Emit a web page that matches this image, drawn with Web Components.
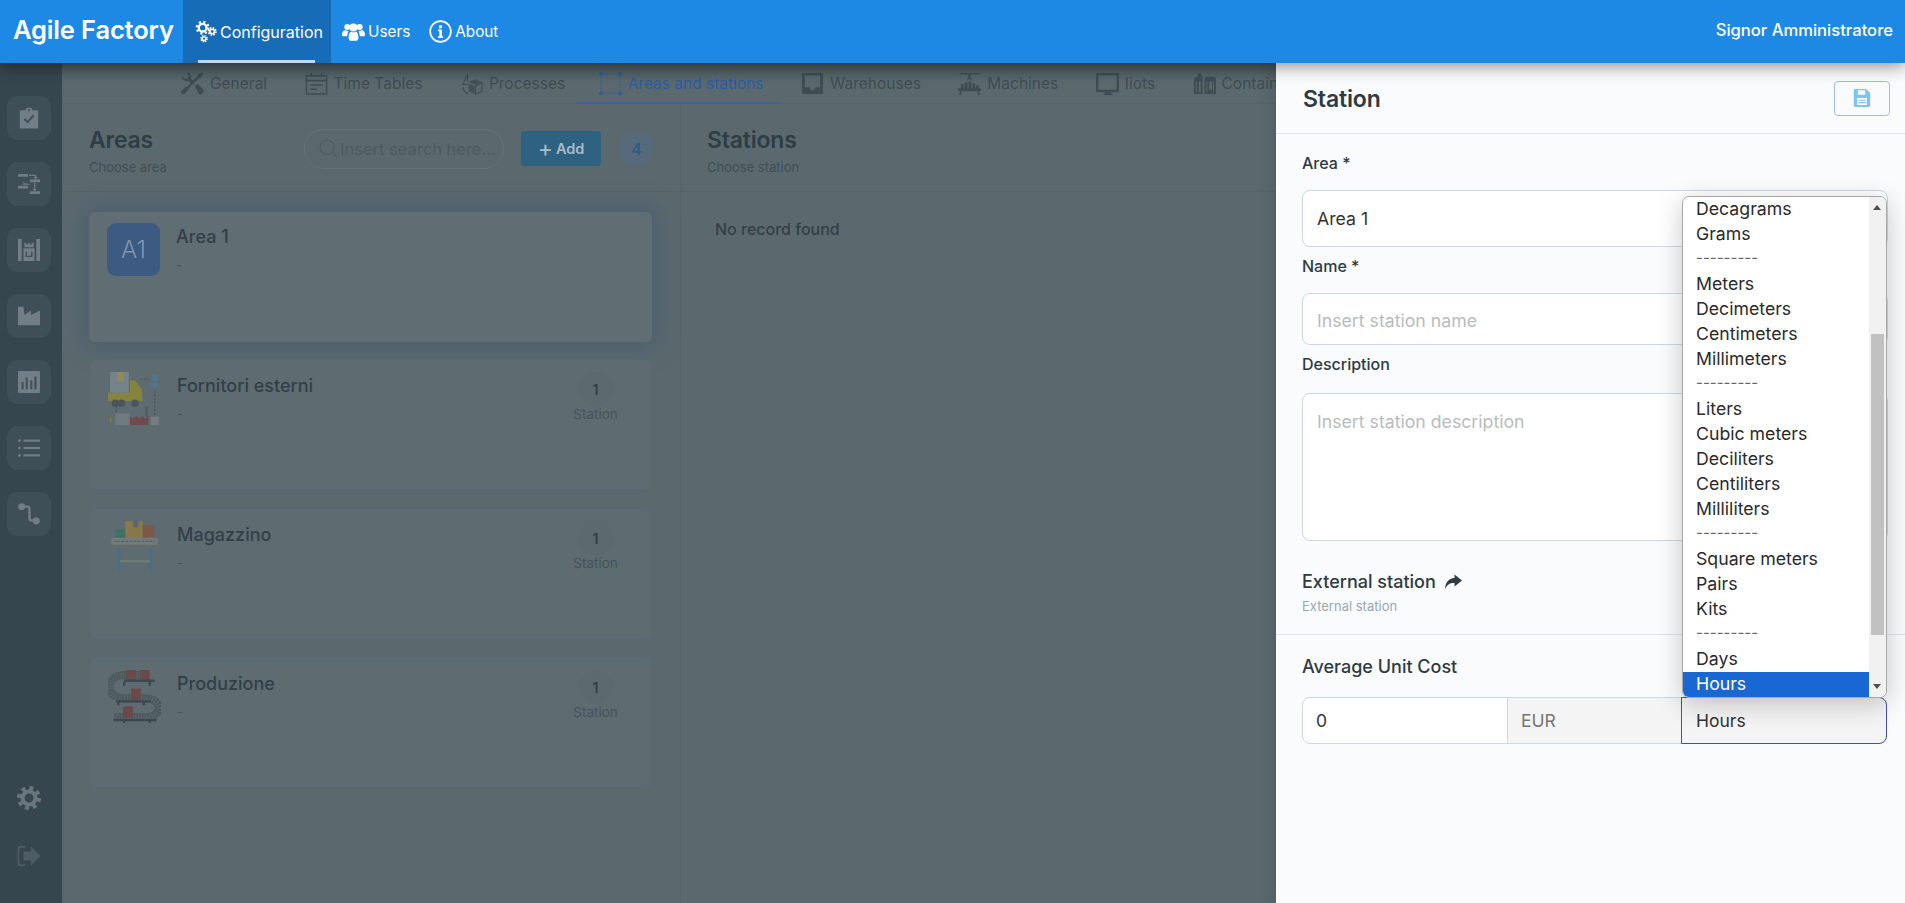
<!DOCTYPE html>
<html lang="en">
<head>
<meta charset="utf-8">
<title>Agile Factory</title>
<style>
  html, body { margin: 0; height: 100%; overflow: hidden; }
  body { font-family: "Inter", "Liberation Sans", sans-serif; color: #2f3d45; background: #5b696f; }
</style>
</head>
<body>
<af-shell>
  <af-topbar slot="top">
    <af-nav icon="cogs" active>Configuration</af-nav>
    <af-nav icon="users">Users</af-nav>
    <af-nav icon="info">About</af-nav>
  </af-topbar>
  <af-rail slot="rail"></af-rail>
  <af-tabs slot="tabs">
    <af-tab icon="tools">General</af-tab>
    <af-tab icon="calendar">Time Tables</af-tab>
    <af-tab icon="cube" style="--after:11.5px">Processes</af-tab>
    <af-tab icon="area" active>Areas and stations</af-tab>
    <af-tab icon="inbox">Warehouses</af-tab>
    <af-tab icon="crane">Machines</af-tab>
    <af-tab icon="monitor">Iiots</af-tab>
    <af-tab icon="silo">Containers</af-tab>
  </af-tabs>
  <af-column slot="left" heading="Areas" sub="Choose area" count="4" class="areas">
    <af-card name="Area 1" initials="A1" selected></af-card>
    <af-card name="Fornitori esterni" art="truck" stations="1"></af-card>
    <af-card name="Magazzino" art="table" stations="1"></af-card>
    <af-card name="Produzione" art="belt" stations="1"></af-card>
  </af-column>
  <af-column slot="right" heading="Stations" sub="Choose station" count="0" class="stations">
    <af-empty>No record found</af-empty>
  </af-column>
  <af-drawer slot="drawer"></af-drawer>
</af-shell>

<script>
const icons = {
  cogs: `<svg viewBox="0 0 24 24"><g fill="none" stroke="currentColor">
    <circle cx="9" cy="8" r="4" stroke-width="2.4"/><circle cx="9" cy="8" r="6" stroke-width="2.6" stroke-dasharray="2.2 2.51"/>
    <circle cx="19" cy="12" r="2.3" stroke-width="1.7"/><circle cx="19" cy="12" r="3.8" stroke-width="1.9" stroke-dasharray="1.6 1.38"/>
    <circle cx="10.5" cy="19.5" r="1.9" stroke-width="1.5"/><circle cx="10.5" cy="19.5" r="3.1" stroke-width="1.7" stroke-dasharray="1.3 1.13"/></g></svg>`,
  users: `<svg viewBox="0 0 26 22" fill="currentColor"><circle cx="6" cy="6" r="3.4"/><circle cx="20" cy="6" r="3.4"/><circle cx="13" cy="6.5" r="4.6"/>
    <path d="M0 15c0-4 2-5.500 4-5.500 1 .8 2.300 1 3.400.8-.8 1.600-1.400 3.500-1.500 6.200H2c-1.200 0-2-.5-2-1.500zM26 15c0-4-2-5.500-4-5.500-1 .8-2.300 1-3.400.8.8 1.600 1.400 3.500 1.500 6.200H24c1.200 0 2-.5 2-1.500z"/>
    <path d="M7.500 18c0-5 1.700-6.800 3-6.800 1.500 1 3.500 1 5 0 1.300 0 3 1.800 3 6.800 0 2.500-1.500 3.500-3 3.500h-5c-1.500 0-3-1-3-3.500z"/></svg>`,
  info: `<svg viewBox="0 0 24 24"><circle cx="12" cy="12" r="10.800" fill="none" stroke="currentColor" stroke-width="1.800"/>
    <path fill="currentColor" d="M10.500 5.500h3v3h-3zM9.500 10h4v7h1.200v1.800H9.500V17h1.300v-5.200H9.500z"/></svg>`,
  tools: `<svg viewBox="0 0 24 24" fill="currentColor">
    <path d="M1.100 4.200 4.300 7.400 7.300 6.600 8.100 3.600 4.900.6C7.800-.2 10.600 1.700 10.800 4.700c0 .8-.1 1.400-.3 2L14 10l-2.500 2.500L8 9.300c-3.200 1.100-7.900-1.100-6.900-5.100z"/>
    <path d="M23 1.500 21.500 0l-4.200 2.800v1.700L5.900 15.800l-1.100-.3-4 4c-.9 1-.9 2.300 0 3.100.9.900 2.200.9 3.100 0l4-4-.3-1.100L19 6.200h1.700z"/>
    <path d="m14.500 14.800 2.600-2.600 6 5.800c.9.900.9 2.400 0 3.300l-1.300 1.300c-.9.900-2.400.9-3.300 0z"/></svg>`,
  calendar: `<svg viewBox="0 0 24 24" fill="none" stroke="currentColor" stroke-width="1.600"><rect x="1.500" y="4" width="21" height="19"/><path d="M1.500 9h21M6.500 1v4M17.500 1v4M5.500 13.500h13M5.500 18h7"/></svg>`,
  cube: `<svg viewBox="0 0 24 24"><path fill="none" stroke="currentColor" stroke-width="1.200" d="M8 2 3 13l5 0M8 2v8M3 16c.5 3 3 6 6 7"/><path fill="currentColor" d="M9 10.500 16 7.500l7 3-7 3zM9 12l6.300 2.700V23L9 20z" opacity=".85"/><path fill="none" stroke="currentColor" stroke-width="1.200" d="M23 11v9.200L16.200 23v-8.500z"/></svg>`,
  area: `<svg viewBox="0 0 24 24"><path fill="none" stroke="currentColor" stroke-width="1.100" stroke-dasharray="1.500 1.300" d="M2 2h20v20H2z"/><g fill="currentColor"><rect width="3.600" height="3.600"/><rect x="20.400" width="3.600" height="3.600"/><rect y="20.400" width="3.600" height="3.600"/><rect x="20.400" y="20.400" width="3.600" height="3.600"/></g></svg>`,
  inbox: `<svg viewBox="0 0 24 24" fill="currentColor"><path fill-rule="evenodd" d="M2.500 1h19c1 0 1.500.6 1.500 1.500v19c0 1-.6 1.500-1.500 1.500h-19C1.600 23 1 22.400 1 21.500v-19C1 1.600 1.600 1 2.500 1zM4 3.500v12.500h5l1.500 3h3l1.500-3h5V3.500z"/></svg>`,
  crane: `<svg viewBox="0 0 24 24" fill="currentColor"><path d="M2 1h20v1.300H13v3l2 3-1 .7-2-2.200-2 2.200-1-.7 2-3V2.300H2z"/><rect x="3" y="13" width="3" height="5"/><rect x="7" y="11" width="3" height="7"/><rect x="11" y="10" width="3" height="8"/><rect x="15" y="12" width="3" height="6"/><rect x="19" y="14" width="3" height="4"/><rect y="17" width="24" height="3" rx="1.500"/><path d="M2 20h1.500v4H1zM20.500 20H22l1 4h-2.500z"/></svg>`,
  monitor: `<svg viewBox="0 0 24 24" fill="currentColor"><path fill-rule="evenodd" d="M1.500 1h21c.9 0 1.500.6 1.500 1.500v17c0 .9-.6 1.500-1.500 1.500H15v1.500h2V24H7v-.5h2V21H1.500C.6 21 0 20.400 0 19.500v-17C0 1.600.6 1 1.500 1zM2.500 3.500v15h19v-15z"/></svg>`,
  silo: `<svg viewBox="0 0 24 24" fill="currentColor"><path fill-rule="evenodd" d="M1 8c0-2 1.500-3 4-3v-.5C5 2 6.500 1 7 1s2 1 2 3.500V5h1v18H1zM3 10v11h1V10zM6 10v11h2V10z"/><path fill-rule="evenodd" d="M12 23V8c0-2 1.500-3 3.500-3H20c2.500 0 4 1 4 3v15zM14 10v11h1V10zM17 10v9l1.500-1.500L20 19v-9zM22 10h-1v11h1z"/></svg>`,
  clipboard: `<svg viewBox="0 0 24 24"><path fill="currentColor" d="M3 3.500h5C8.300 1.500 10 .5 12 .5s3.700 1 4 3h5c.8 0 1 .5 1 1V22c0 .8-.4 1.500-1.500 1.500h-17C2.400 23.500 2 22.800 2 22V4.500c0-.5.2-1 1-1z"/><path fill="none" stroke="#3f4f58" stroke-width="2.200" d="m7 13 3.500 3.500L17 9"/><circle cx="12" cy="3.500" r="1.200" fill="#3f4f58"/></svg>`,
  flows: `<svg viewBox="0 0 24 24" fill="currentColor"><path d="M0 1h11v3H0zM13 7h11v3H13zM0 14h11v3H0zM13 20h11v3H13z"/><path d="M12 2h6.500c1 0 1.500.5 1.500 1.500V4.500h1.500L19.300 7 17 4.500h1.500V3.200H12zM13 12h-7V11H4.500L6.800 8.800 6 8.800V11zM5 12.200h8v1H5zM17.600 11h1.300v6.500h1.600l-2.300 2.300-2.200-2.300h1.600z"/></svg>`,
  store: `<svg viewBox="0 0 24 24"><path fill="currentColor" d="M0 0h4v24H0zM20 0h4v24h-4zM7 9V4h2v2h2V4h2v2h2V4h2v5zM6 10h12v14H6z"/><path fill="none" stroke="#3f4f58" stroke-width="1.500" d="M9 14v5h6v-5"/></svg>`,
  chart: `<svg viewBox="0 0 24 20" fill="currentColor"><path d="M0 0h6l1 9 7-5v5l10-5v16H0z"/></svg>`,
  bars: `<svg viewBox="0 0 24 24"><rect width="24" height="24" rx="1" fill="currentColor"/><path stroke="#3f4f58" stroke-width="2.200" d="M5 12v8M9.500 7v13M14.500 10v10M19 6v14"/></svg>`,
  list: `<svg viewBox="0 0 24 22" fill="currentColor"><circle cx="1.500" cy="3" r="1.500"/><circle cx="1.500" cy="11" r="1.500"/><circle cx="1.500" cy="19" r="1.500"/><path d="M6 1.800h18v2.400H6zM6 9.800h18v2.400H6zM6 17.800h18v2.400H6z"/></svg>`,
  route: `<svg viewBox="0 0 24 24"><path fill="none" stroke="currentColor" stroke-width="2.600" d="M4 4h6c1.500 0 2.500 1 2.500 2.500v10c0 1.500 1 2.500 2.500 2.500h5"/><circle cx="4" cy="4" r="3.800" fill="currentColor"/><circle cx="20" cy="19.500" r="3.800" fill="currentColor"/></svg>`,
  gear: `<svg viewBox="0 0 28 28" fill="none" stroke="currentColor"><circle cx="14" cy="14" r="7" stroke-width="4.400"/><circle cx="14" cy="14" r="10.500" stroke-width="5" stroke-dasharray="4.100 4.150"/></svg>`,
  logout: `<svg viewBox="0 0 26 24"><path fill="none" stroke="currentColor" stroke-width="2" d="M9 2H4C2.500 2 1.500 3 1.500 4.500v15C1.500 21 2.500 22 4 22h5"/><path fill="currentColor" d="M7 7h8V1.500L25.500 12 15 22.500V17H7z"/></svg>`,
  search: `<svg viewBox="0 0 20 20" fill="none" stroke="currentColor" stroke-width="1.100"><circle cx="8.500" cy="8.500" r="7.500"/><path d="m14 14 5 5"/></svg>`,
  share: `<svg viewBox="0 0 24 20" fill="currentColor"><path d="M14 0 24 8l-10 8v-4.700C8 11 4 13.500 1.500 19.500 1.500 11 6 5 14 4.500z"/></svg>`,
  save: `<svg viewBox="0 0 20 22" fill="currentColor"><path fill-rule="evenodd" d="M2 0h13l5 5v15c0 1.200-.8 2-2 2H2c-1.200 0-2-.8-2-2V2C0 .8.800 0 2 0zM5 1.500V7h9V1.500zM4 11v8.500h12V11z"/><path d="M5.500 13h9v1.300h-9zM5.500 16h9v1.300h-9z"/></svg>`
};

const art = {
  truck: `<svg viewBox="0 0 51 51"><rect x="2" y="0" width="18" height="20" fill="#77838a"/><rect x="9" y="0" width="6" height="9" fill="#8f8a58"/><path d="M0 20h21V8h5l6 8 1 2v10H0z" fill="#85833e"/><circle cx="7" cy="30" r="3.500" fill="#49555b"/><circle cx="13" cy="30" r="3.500" fill="#49555b"/><circle cx="26" cy="30" r="3.500" fill="#49555b"/>
    <path d="M31 7h11" stroke="#49555b" stroke-dasharray="2 1.500"/><circle cx="45" cy="6" r="3.400" fill="#50758d"/><path d="M41 15c0-4 2-5 4-5s4 1 4 5z" fill="#50758d"/><path d="M45 18v24" stroke="#49555b" stroke-dasharray="2 1.500"/><path d="M8 33v15" stroke="#49555b" stroke-dasharray="2 1.500"/>
    <rect x="7" y="40" width="14" height="11" fill="#6f7b81"/><path d="M21 51V42l3 3 3-3 3 3 3-3 3 3 3-3v9z" fill="#6f4b4e"/><rect x="36" y="33" width="2" height="10" fill="#50595e"/><rect x="41" y="43" width="8" height="8" fill="#727e84"/><path d="M2 42l2 4-2 4-1-4z" fill="#7a7a45"/></svg>`,
  table: `<svg viewBox="0 0 53 60"><rect x="5" y="9" width="12" height="11" fill="#3f6f66"/><rect x="16" y="0" width="20" height="20" fill="#87784a"/><rect x="25" y="0" width="6" height="7" fill="#5a6570"/><rect x="36" y="5" width="13" height="15" fill="#7b5849"/><rect y="19" width="53" height="8" rx="3" fill="#737b7b"/><path d="M3 23h47" stroke="#4d585e" stroke-dasharray="3 1.500" stroke-width="1.200"/><rect x="5" y="27" width="43" height="5" fill="#626c6f"/><path d="M9 30v29M45 30v29" stroke="#426f8a" stroke-width="3"/><rect x="10" y="44" width="34" height="3" fill="#6c7b76"/></svg>`,
  belt: `<svg viewBox="0 0 53 54"><path d="M35 5H18C4 5 1 13 1 18s5 11 17 11h19c11 0 14 6 14 10 0 6-6 9-13 9H6" fill="none" stroke="#4c595f" stroke-width="8"/><path d="M35 5H18C4 5 1 13 1 18s5 11 17 11h19c11 0 14 6 14 10 0 6-6 9-13 9H6" fill="none" stroke="#5f6b71" stroke-width="6" stroke-dasharray=".8 2"/><rect x="18" y="0" width="10" height="12" fill="#694a49"/><rect x="32" y="0" width="10" height="12" fill="#694a49"/><rect x="23" y="19" width="10" height="12" fill="#694a49"/><rect x="15" y="37" width="10" height="12" fill="#694a49"/><path d="M16 11h31M8 32h35M5 51h44" stroke="#3b484e" stroke-width="2.400"/><path d="M16 12v4M42 12v4M10 32v4M36 32v4M16 51v3M42 51v3" stroke="#3b484e" stroke-width="2.400"/></svg>`
};

// small helper, every element has the same shape
function define(tag, css, html, setup) {
  customElements.define(tag, class extends HTMLElement {
    constructor() {
      super();
      this.attachShadow({ mode: "open" });
    }
    connectedCallback() {
      const body = typeof html === "function" ? html(this) : html;
      this.shadowRoot.innerHTML = `<style>${css}</style>${body}`;
      if (setup) setup(this);
    }
  });
}

define("af-icon", `
  :host { display: inline-flex; width: var(--size, 20px); height: var(--size, 20px); flex: none; }
  svg { width: 100%; height: 100%; display: block; }
`, el => icons[el.getAttribute("name")] || "");

define("af-shell", `
  :host {
    display: grid; position: relative; width: 1905px; height: 903px; overflow: hidden;
    grid-template-columns: 62px 619px 1fr;
    grid-template-rows: 63px 41px 1fr;
    grid-template-areas: "top top top" "rail tabs tabs" "rail left right";
    background: #5b696f;
  }
  ::slotted([slot=top]) { grid-area: top; z-index: 5; }
  ::slotted([slot=rail]) { grid-area: rail; }
  ::slotted([slot=tabs]) { grid-area: tabs; }
  ::slotted([slot=left]) { grid-area: left; }
  ::slotted([slot=right]) { grid-area: right; }
  ::slotted([slot=drawer]) { position: absolute; z-index: 3; top: 63px; right: 0; bottom: 0; width: 629px; }
`, `<slot name="top"></slot><slot name="rail"></slot><slot name="tabs"></slot><slot name="left"></slot><slot name="right"></slot><slot name="drawer"></slot>`);

define("af-topbar", `
  :host {
    display: flex; align-items: stretch; height: 63px; background: #1e88e5; color: #fff;
    box-shadow: 0 3px 16px rgba(0, 0, 0, .45);
  }
  .brand { font-size: 25.5px; font-weight: 600; padding-left: 13px; line-height: 59px; width: 183px; box-sizing: border-box; white-space: nowrap; letter-spacing: -.15px; }
  .user { margin-left: auto; padding-right: 12px; line-height: 60px; font-size: 16.6px; font-weight: 500; }
`, `<div class="brand">Agile Factory</div><slot></slot><div class="user">Signor Amministratore</div>`);

define("af-nav", `
  :host { display: flex; align-items: center; position: relative; padding: 0 8px 0 11px; gap: 3px; font-size: 15.3px; font-weight: 400; --size: 23px; }
  :host([active]) { background: #176cb8; width: 148px; box-sizing: border-box; font-size: 16px; }
  :host([active])::after { content: ""; position: absolute; left: 15px; width: 117px; bottom: 0; height: 3px; background: #bdd5ee; }
`, el => `<af-icon name="${el.getAttribute("icon")}"></af-icon><slot></slot>`);

define("af-rail", `
  :host { display: flex; flex-direction: column; background: #36464f; padding: 33px 0 0 7px; box-sizing: border-box; height: 840px; }
  .b { display: flex; align-items: center; justify-content: center; width: 44px; height: 44px; border-radius: 11px; background: #3f4f58; margin-bottom: 22px; color: #727e85; --size: 22px; }
  .end { margin-top: auto; display: flex; flex-direction: column; align-items: center; width: 44px; color: #6a767d; padding-bottom: 35px; }
  .g { --size: 26px; margin-bottom: 33px; }
  .o { --size: 24px; color: #4e5c64; }
`, () => `
  ${["clipboard", "flows", "store", "chart", "bars", "list", "route"].map(n => `<div class="b"><af-icon name="${n}"></af-icon></div>`).join("")}
  <div class="end"><af-icon class="g" name="gear"></af-icon><af-icon class="o" name="logout"></af-icon></div>`);

define("af-tabs", `
  :host { display: flex; align-items: stretch; box-sizing: border-box; height: 41px; padding-left: 97px; border-bottom: 1px solid #566369; overflow: hidden; white-space: nowrap; background: linear-gradient(#4b585e, #5b696f 18px); }
`, `<slot></slot>`);

define("af-tab", `
  :host { display: flex; align-items: center; flex: none; gap: 6px; padding: 0 var(--after, 15.5px) 0 22px; height: 40px; font-size: 15.5px; color: #3f4c53; --size: 23px; }
  :host([active]) { color: #2c5ba3; box-shadow: inset 0 -1px 0 #3f6297, 0 1px 0 #3f6297; }
`, el => `<af-icon name="${el.getAttribute("icon")}"></af-icon><slot></slot>`);

define("af-column", `
  :host { display: block; min-width: 0; box-sizing: border-box; }
  :host(.areas) { border-right: 1px solid #566369; --pad: 27px; --list-pad: 20px 28px 0 27px; --gap: 18px; --search: 200px; }
  :host(.stations) { --pad: 26px; --list-pad: 27px 0 0 34px; --search: 200px; }
  .head { display: flex; align-items: center; height: 88px; box-sizing: border-box; border-bottom: 1px solid #566369; padding: 0 0 0 var(--pad); }
  .t { flex: 1; padding-top: 6px; }
  h2 { margin: 0; font-size: 23px; font-weight: 600; line-height: 28px; color: #2f3d45; letter-spacing: -.2px; }
  small { display: block; font-size: 13px; line-height: 18px; margin-top: 4px; color: #414e55; }
  .search { display: flex; align-items: center; gap: 2px; box-sizing: border-box; width: var(--search); height: 40px; margin-top: 2px; border: 1px solid #65727a; border-radius: 20px; padding-left: 14px; font-size: 16.5px; color: #4c5a61; --size: 19px; white-space: nowrap; }
  .add { display: flex; align-items: center; justify-content: center; gap: 3px; width: 80px; height: 35px; margin: 2px 0 0 17px; border-radius: 3px; background: #2e6281; color: #a7bccb; font-weight: 600; font-size: 14.5px; }
  .add b { font-weight: 400; font-size: 23px; line-height: 20px; }
  .count { display: flex; align-items: center; justify-content: center; width: 35px; height: 35px; margin: 2px 26px 0 18px; border-radius: 50%; background: #566a7c; color: #335a82; font-size: 16px; font-weight: 600; }
  .list { padding: var(--list-pad); display: flex; flex-direction: column; gap: var(--gap, 0); }
`, el => `
  <div class="head">
    <div class="t"><h2>${el.getAttribute("heading")}</h2><small>${el.getAttribute("sub")}</small></div>
    <div class="search"><af-icon name="search"></af-icon>Insert search here...</div>
    <div class="add"><b>+</b>Add</div>
    <div class="count">${el.getAttribute("count")}</div>
  </div>
  <div class="list"><slot></slot></div>`);

define("af-empty", `
  :host { display: block; font-size: 16px; font-weight: 500; color: #333f46; line-height: 20px; }
`, `<slot></slot>`);

define("af-card", `
  :host { display: flex; box-sizing: border-box; height: 131px; position: relative; padding: 12px 14px 0 18px; border: 1px solid #536a7a; border-radius: 6px; background: #5e6b71; }
  :host([selected]) { height: 130px; border-color: transparent; background: #606d73; padding: 10px 14px 0 17px; margin-bottom: -1px; box-shadow: 0 0 20px 7px #4e606c; }
  .pic { width: 53px; height: 53px; flex: none; margin-right: 16px; }
  .pic svg { width: 100%; height: 100%; display: block; }
  .mono { border-radius: 9px; background: #3c5a82; color: #7f97b0; display: flex; align-items: center; justify-content: center; font-size: 24px; font-weight: 300; }
  .body { flex: 1; padding-top: 3px; }
  .name { font-size: 18px; font-weight: 500; line-height: 22px; color: #333f48; }
  .dash { font-size: 13px; line-height: 16px; margin-top: 9px; color: #46535a; }
  .num { display: flex; flex-direction: column; align-items: center; width: 60px; margin: 0 11.5px 0 0; }
  .c { width: 34px; height: 34px; border-radius: 50%; background: #5c696f; display: flex; align-items: center; justify-content: center; font-size: 14px; font-weight: 600; color: #333f46; }
  .l { font-size: 13.5px; line-height: 16px; margin-top: 0; color: #46535a; }
`, el => {
  const a = el.getAttribute("art"), s = el.getAttribute("stations");
  const pic = a ? `<div class="pic">${art[a]}</div>` : `<div class="pic mono">${el.getAttribute("initials")}</div>`;
  const num = s ? `<div class="num"><div class="c">${s}</div><div class="l">Station</div></div>` : "";
  return `${pic}<div class="body"><div class="name">${el.getAttribute("name")}</div><div class="dash">-</div></div>${num}`;
});

define("af-field", `
  :host { display: block; margin-top: var(--top, 8px); }
  label { display: block; font-size: 16px; line-height: 20px; font-weight: 500; color: #2f3a42; margin-bottom: var(--under, 18px); }
  .box { box-sizing: border-box; display: block; height: var(--h, 52px); padding: var(--py, 14px) 13px var(--py, 14px) 14px; background: #fff; border: 1px solid #c9d9e8; border-radius: 8px; font-size: 17.7px; line-height: 24px; color: #333; }
  .ph { color: #b9bcbe; }
`, el => {
  const ph = el.getAttribute("placeholder");
  return `<label>${el.getAttribute("label")}</label><div class="box ${ph ? "ph" : ""}">${ph || el.getAttribute("value")}</div>`;
});

const UNITS = ["Decagrams", "Grams", "---------", "Meters", "Decimeters", "Centimeters", "Millimeters", "---------", "Liters", "Cubic meters", "Deciliters", "Centiliters", "Milliliters", "---------", "Square meters", "Pairs", "Kits", "---------", "Days", "Hours"];

define("af-options", `
  :host { display: flex; position: absolute; right: 0; bottom: calc(100% - 1px); width: 205px; height: 502px; box-sizing: border-box; border: 1px solid #a8a8a8; border-radius: 7px; background: #fff; overflow: hidden; box-shadow: 0 6px 26px rgba(0, 0, 0, .22); font-size: 17.7px; color: #2a2a2a; }
  .rows { flex: 1; }
  .r { height: 25px; line-height: 24px; padding-left: 13px; white-space: nowrap; }
  .r.sel { background: #1967d2; color: #fff; }
  .r.sep { color: #666; font-size: 15px; line-height: 22px; }
  .bar { position: relative; width: 17px; background: #f1f1f1; }
  .thumb { position: absolute; left: 2px; right: 2px; top: 137px; height: 301px; background: #c1c1c1; }
  .a { position: absolute; left: 4px; border: 4.500px solid transparent; }
  .up { top: 4px; border-bottom: 5px solid #505050; }
  .dn { bottom: 4px; border-top: 5px solid #505050; }
`, () => `<div class="rows">${UNITS.map(u => `<div class="r ${u === "Hours" ? "sel" : ""} ${u[0] === "-" ? "sep" : ""}">${u}</div>`).join("")}</div>
  <div class="bar"><div class="a up"></div><div class="thumb"></div><div class="a dn"></div></div>`);

define("af-cost", `
  :host { display: block; margin: 21px 1px 0 0; position: relative; }
  .g { display: flex; height: 47px; box-sizing: border-box; background: #fff; border: 1px solid #c9d9e8; border-radius: 8px; font-size: 17.5px; line-height: 45px; color: #333; }
  .g > div { padding-left: 13px; box-sizing: border-box; }
  .v { width: 204px; }
  .cur { width: 175px; background: #f4f4f4; color: #757575; border-left: 1px solid #c9d9e8; }
  .sel { flex: 1; background: #f4f4f4; margin: -1px; padding-left: 14px !important; border: 1px solid #3f51b5; border-radius: 0 8px 8px 0; line-height: 45px; }
`, `<div class="g"><div class="v">0</div><div class="cur">EUR</div><div class="sel">Hours</div></div><af-options></af-options>`);

define("af-drawer", `
  :host { display: block; background: #f9fbfd; box-sizing: border-box; box-shadow: -4px 0 14px rgba(0, 0, 0, .12); color: #2f3a42; }
  header { display: flex; align-items: center; justify-content: space-between; height: 71px; box-sizing: border-box; border-bottom: 1px solid #dbe5ef; padding: 0 15px 0 27px; }
  h1 { margin: 2px 0 0; font-size: 23px; font-weight: 600; color: #2f3a42; letter-spacing: -.15px; }
  .save { display: flex; align-items: center; justify-content: center; width: 56px; height: 35px; box-sizing: border-box; border: 1px solid #a9b8e8; border-radius: 4px; color: #7cc4f8; --size: 18px; }
  .top { padding: 19px 17px 20px 26px; border-bottom: 1px solid #dbe5ef; }
  .ext { margin-top: 30px; font-size: 18px; line-height: 21px; font-weight: 500; display: flex; align-items: center; gap: 8px; --size: 18px; }
  .hint { margin-top: 6px; font-size: 13px; line-height: 16px; color: #9aa8b0; }
  .bottom { padding: 23px 17px 0 26px; }
  .bottom label { display: block; font-size: 18px; line-height: 18px; font-weight: 500; }
`, `
  <header><h1>Station</h1><div class="save"><af-icon name="save"></af-icon></div></header>
  <div class="top">
    <af-field label="Area *" value="Area 1" style="--top:0;--under:17px;--h:57px;--py:16px"></af-field>
    <af-field label="Name *" placeholder="Insert station name" style="--top:9px;--under:17px;--h:52px;--py:15px"></af-field>
    <af-field label="Description" placeholder="Insert station description" style="--top:9px;--under:19px;--h:148px;--py:16px"></af-field>
    <div class="ext">External station <af-icon name="share"></af-icon></div>
    <div class="hint">External station</div>
  </div>
  <div class="bottom"><label>Average Unit Cost</label><af-cost></af-cost></div>`);
</script>
</body>
</html>
